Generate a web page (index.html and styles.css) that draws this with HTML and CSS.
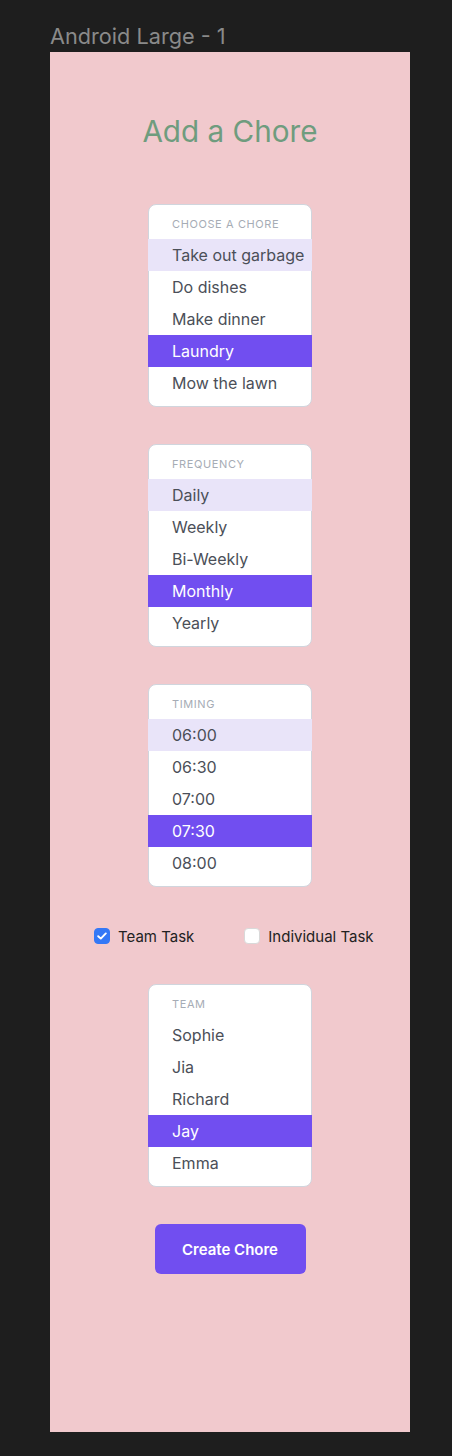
FILE: index.html
```html
<!DOCTYPE html>
<html lang="en">
<head>
    <meta charset="UTF-8">
    <meta name="viewport" content="width=device-width, initial-scale=1.0">
    <title>Add a Chore</title>
    <link rel="stylesheet" href="styles.css">
</head>
<body>
    <div class="frame-name">Android Large - 1</div>

    <main class="frame">
        <h1>Add a Chore</h1>

        <div class="picker">
            <div class="picker-label">Choose a chore</div>
            <div class="option hover">Take out garbage</div>
            <div class="option">Do dishes</div>
            <div class="option">Make dinner</div>
            <div class="option selected">Laundry</div>
            <div class="option">Mow the lawn</div>
        </div>

        <div class="picker">
            <div class="picker-label">Frequency</div>
            <div class="option hover">Daily</div>
            <div class="option">Weekly</div>
            <div class="option">Bi-Weekly</div>
            <div class="option selected">Monthly</div>
            <div class="option">Yearly</div>
        </div>

        <div class="picker">
            <div class="picker-label">Timing</div>
            <div class="option hover">06:00</div>
            <div class="option">06:30</div>
            <div class="option">07:00</div>
            <div class="option selected">07:30</div>
            <div class="option">08:00</div>
        </div>

        <div class="task-type">
            <label class="check-item team">
                <span class="box checked">
                    <svg width="10" height="8" viewBox="0 0 10 8"><path d="M1.2 4.2 L3.8 6.6 L8.8 1.4" fill="none" stroke="#fff" stroke-width="1.9" stroke-linecap="round" stroke-linejoin="round"/></svg>
                </span>
                Team Task
            </label>
            <label class="check-item">
                <span class="box"></span>
                Individual Task
            </label>
        </div>

        <div class="picker">
            <div class="picker-label">Team</div>
            <div class="option">Sophie</div>
            <div class="option">Jia</div>
            <div class="option">Richard</div>
            <div class="option selected">Jay</div>
            <div class="option">Emma</div>
        </div>

        <button class="create-btn">Create Chore</button>
    </main>
</body>
</html>
```

FILE: styles.css
```css
body {
    margin: 0;
    background-color: #1e1e1e;
    font-family: Inter, "Noto Sans", sans-serif;
    height: 1456px;
}
.frame-name {
    padding: 23px 0 0 50px;
    font-size: 21.7px;
    line-height: 26px;
    color: #8a8a8a;
    height: 29px;
}
.frame {
    width: 360px;
    height: 1380px;
    margin-left: 50px;
    background-color: #f1c9cd;
    box-sizing: border-box;
    padding-top: 61px;
    display: flex;
    flex-direction: column;
    align-items: center;
}
h1 {
    margin: 0 0 55px 0;
    font-size: 29.7px;
    line-height: 36px;
    font-weight: 400;
    color: #6f9c7e;
}
.picker {
    width: 164px;
    box-sizing: border-box;
    background-color: #ffffff;
    border: 1px solid #d0d5dd;
    border-radius: 8px;
    padding: 11px 0 7px 0;
    margin-bottom: 37px;
}
.picker-label {
    padding-left: 23px;
    font-size: 11px;
    line-height: 16px;
    text-transform: uppercase;
    letter-spacing: 0.6px;
    color: #a6acb5;
    margin-bottom: 7px;
}
.option {
    margin: 0 -1px;
    padding-left: 24px;
    height: 32px;
    line-height: 32px;
    font-size: 16px;
    color: #4b4f58;
    white-space: nowrap;
}
.option.hover {
    background-color: #e9e4f9;
}
.option.selected {
    background-color: #714ef0;
    color: #ffffff;
}
.task-type {
    align-self: stretch;
    display: flex;
    align-items: center;
    height: 20px;
    padding-left: 44px;
    margin: 2px 0 38px 0;
}
.check-item {
    display: flex;
    align-items: center;
    gap: 8px;
    font-size: 15px;
    color: #222222;
}
.check-item.team {
    margin-right: 50px;
}
.box {
    width: 16px;
    height: 16px;
    box-sizing: border-box;
    border-radius: 4px;
    background-color: #ffffff;
    border: 1px solid #d9d9d9;
    display: flex;
    align-items: center;
    justify-content: center;
}
.box.checked {
    background-color: #3478f6;
    border-color: #3478f6;
}
.create-btn {
    width: 151px;
    height: 50px;
    border: none;
    border-radius: 6px;
    background-color: #714ef0;
    color: #ffffff;
    font-family: Inter, "Noto Sans", sans-serif;
    font-size: 15px;
    font-weight: 600;
    cursor: pointer;
}
```
